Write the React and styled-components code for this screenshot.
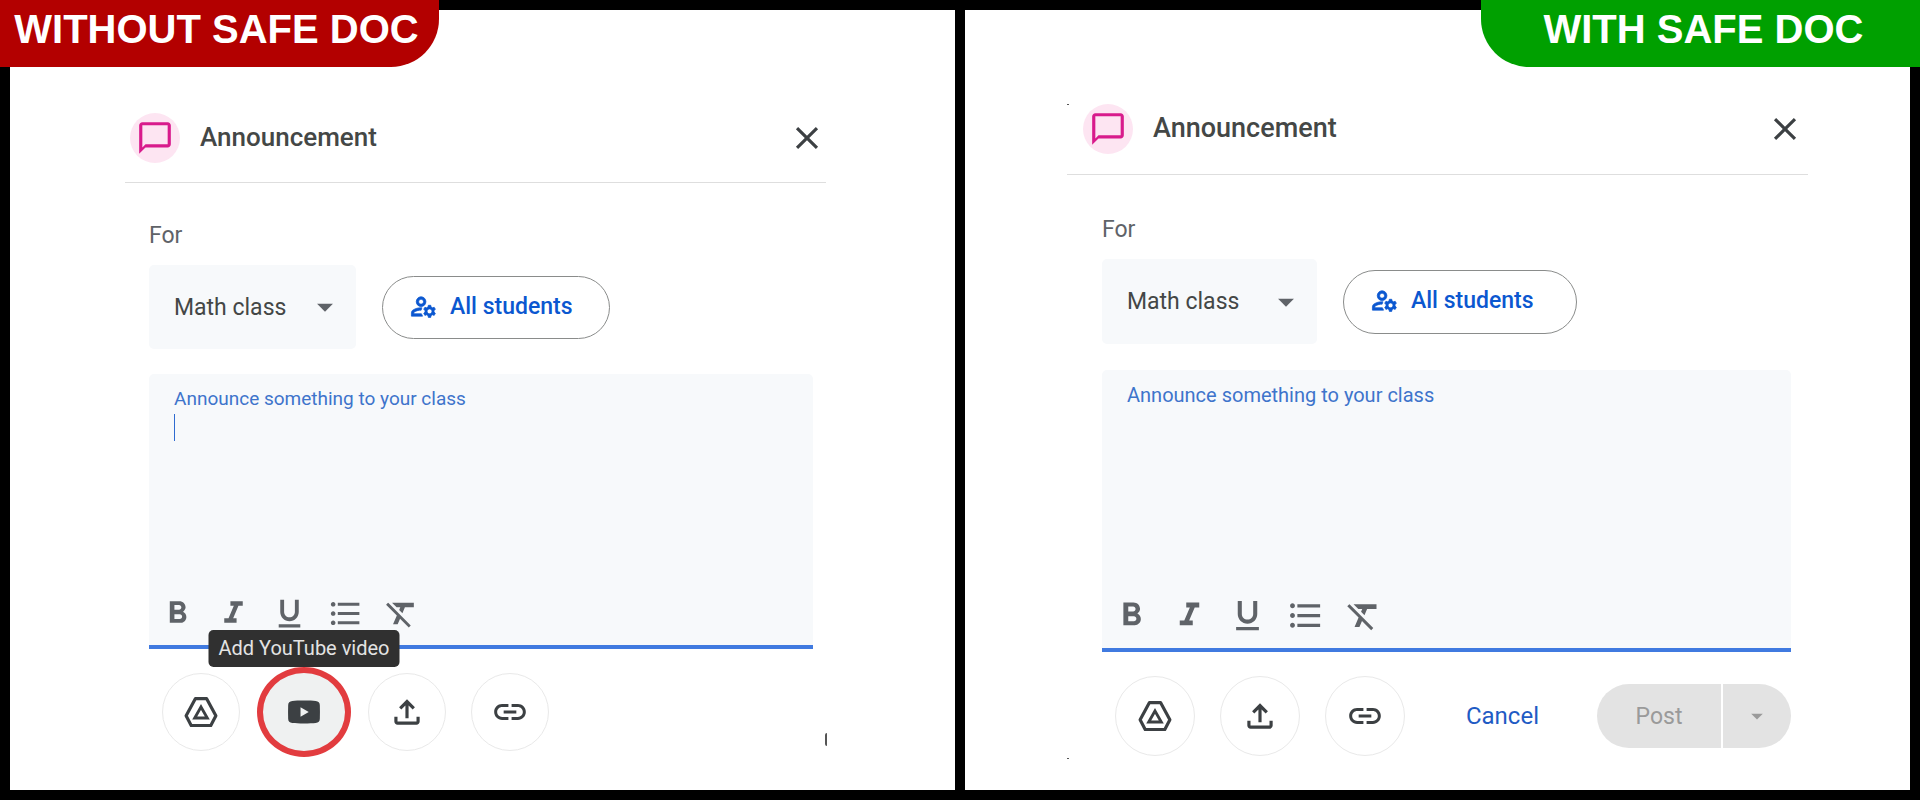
import React from "react";
import styled, { createGlobalStyle, css, ThemeProvider } from "styled-components";
import {
  MdArrowDropDown,
  MdChatBubbleOutline,
  MdClose,
  MdFormatBold,
  MdFormatClear,
  MdFormatItalic,
  MdFormatListBulleted,
  MdFormatUnderlined,
  MdLink,
  MdOutlineFileUpload,
  MdOutlineManageAccounts,
} from "react-icons/md";

const GlobalStyle = createGlobalStyle`
  * {
    box-sizing: border-box;
  }

  body {
    margin: 0;
    background-color: #000000;
    font-family: Roboto, "Liberation Sans", sans-serif;
  }

  button, select, textarea {
    margin: 0;
    padding: 0;
    border: none;
    background: none;
    font-family: inherit;
  }

  svg {
    display: block;
    flex: none;
  }
`;

// the two dialogs share every part and differ only in these sizes
const compact = {
  panelPadding: "103px 129px 0 115px",
  headPadding: "0 0 19px 5px",
  titleSize: "26px",
  bodyPadding: "40px 13px 0 24px",
  selectWidth: "207px",
  selectHeight: "84px",
  pillWidth: "228px",
  pillHeight: "63px",
  labelSize: "19px",
  rowGap: "25px",
  editorHeight: "275px",
  icon: "37px",
  toolWidth: "56px",
  round: "78px",
};

const roomy = {
  panelPadding: "94px 102px 0 102px",
  headPadding: "0 4px 20px 16px",
  titleSize: "27px",
  bodyPadding: "42px 17px 0 35px",
  selectWidth: "215px",
  selectHeight: "85px",
  pillWidth: "234px",
  pillHeight: "64px",
  labelSize: "20px",
  rowGap: "26px",
  editorHeight: "282px",
  icon: "39px",
  toolWidth: "58px",
  round: "80px",
};

const Page = styled.main`
  position: relative;
  display: grid;
  grid-template-columns: repeat(2, minmax(0, 1fr));
  gap: 10px;
  min-height: 100vh;
  padding: 10px;
`;

const Banner = styled.h2`
  position: absolute;
  top: 0;
  width: 439px;
  height: 67px;
  margin: 0;
  background-color: ${(props) => props.$color};
  color: #ffffff;
  font-family: "Liberation Sans", Arial, sans-serif;
  font-size: 40px;
  font-weight: 700;
  line-height: 58px;
  text-align: center;
  ${(props) =>
    props.$side === "left"
      ? css`
          left: 0;
          padding-right: 6px;
          border-radius: 0 0 48px 0;
        `
      : css`
          right: 0;
          padding-left: 6px;
          border-radius: 0 0 0 48px;
        `}
`;

const Panel = styled.section`
  padding: ${(props) => props.theme.panelPadding};
  background-color: #ffffff;
`;

const Dialog = styled.div`
  position: relative;
`;

const Speck = styled.span`
  position: absolute;
  background-color: #555555;
  ${(props) =>
    props.$place === "edge" &&
    css`
      right: -1px;
      bottom: 5px;
      width: 2px;
      height: 13px;
      border-radius: 2px 0 0 2px;
    `}
  ${(props) =>
    props.$place === "top" &&
    css`
      top: 0;
      left: 0;
      width: 2px;
      height: 1px;
    `}
  ${(props) =>
    props.$place === "bottom" &&
    css`
      bottom: -3px;
      left: 0;
      width: 2px;
      height: 1px;
    `}
`;

const Head = styled.header`
  display: flex;
  align-items: center;
  padding: ${(props) => props.theme.headPadding};
  border-bottom: 1px solid #dedede;
`;

const Badge = styled.span`
  display: flex;
  align-items: center;
  justify-content: center;
  width: 50px;
  height: 50px;
  margin-right: 20px;
  border-radius: 50%;
  background-color: #fde5f2;
  color: #d81b8c;
`;

const Title = styled.h3`
  flex: 1;
  margin: 0;
  padding-bottom: 3px;
  color: #444746;
  font-size: ${(props) => props.theme.titleSize};
  font-weight: 500;
  line-height: 32px;
`;

const CloseButton = styled.button`
  color: #3c4043;
  cursor: pointer;
`;

const Body = styled.div`
  padding: ${(props) => props.theme.bodyPadding};
`;

const ForLabel = styled.label`
  display: block;
  margin-bottom: 16px;
  color: #5f6368;
  font-size: 23px;
  line-height: 26px;
`;

const AudienceRow = styled.div`
  display: flex;
  align-items: center;
  gap: 26px;
  margin-bottom: ${(props) => props.theme.rowGap};
`;

const SelectBox = styled.div`
  position: relative;
  width: ${(props) => props.theme.selectWidth};

  > select {
    appearance: none;
    width: 100%;
    height: ${(props) => props.theme.selectHeight};
    padding-left: 25px;
    border-radius: 5px;
    background-color: #f7f9fb;
    color: #444746;
    font-size: 23px;
  }

  > svg {
    position: absolute;
    top: 50%;
    right: 12px;
    transform: translateY(-50%);
    color: #5f6368;
    pointer-events: none;
  }
`;

const StudentsButton = styled.button`
  display: flex;
  align-items: center;
  gap: 12px;
  width: ${(props) => props.theme.pillWidth};
  height: ${(props) => props.theme.pillHeight};
  padding: 0 0 2px 26px;
  border: 1px solid #8a8c8b;
  border-radius: 32px;
  color: #0b57d0;
  font-size: 23px;
  font-weight: 500;
  cursor: pointer;

  path {
    stroke-width: 0.6px;
  }

  path[fill="none"] {
    stroke: none;
  }
`;

const Editor = styled.div`
  display: flex;
  flex-direction: column;
  height: ${(props) => props.theme.editorHeight};
  padding: 13px 0;
  border-bottom: 4px solid #407ae0;
  border-radius: 5px 5px 0 0;
  background-color: #f7f9fb;

  > label {
    padding-left: 25px;
    color: #3e74cb;
    font-size: ${(props) => props.theme.labelSize};
    line-height: 24px;
  }
`;

const Writing = styled.div`
  position: relative;
  flex: 1;

  > textarea {
    display: block;
    width: 100%;
    height: 100%;
    padding: 4px 25px;
    outline: none;
    resize: none;
    font-size: 22px;
    line-height: 26px;
  }
`;

const Caret = styled.span`
  position: absolute;
  top: 3px;
  left: 25px;
  width: 1px;
  height: 27px;
  background-color: #2f6bd0;
`;

const Toolbar = styled.div`
  display: flex;
`;

const ToolButton = styled.button`
  display: flex;
  justify-content: center;
  width: ${(props) => props.theme.toolWidth};
  color: #5f6368;
  cursor: pointer;
`;

const Actions = styled.div`
  display: flex;
  align-items: center;
  gap: 25px;
  margin-top: 24px;
  padding-left: 13px;
`;

const RoundButton = styled.button`
  display: flex;
  align-items: center;
  justify-content: center;
  width: ${(props) => props.theme.round};
  height: ${(props) => props.theme.round};
  border: 1px solid #e9e9e9;
  border-radius: 50%;
  color: #3c4043;
  cursor: pointer;

  ${(props) =>
    props.$marked &&
    css`
      width: 94px;
      height: 90px;
      margin: -6px -8px;
      border: 6px solid #e23c3f;
      background-color: #eff1f1;
    `}
`;

const TooltipAnchor = styled.div`
  position: relative;
`;

const Tooltip = styled.span`
  position: absolute;
  bottom: 84px;
  left: 50%;
  width: 191px;
  transform: translateX(-50%);
  border-radius: 5px;
  background-color: #303030;
  color: #e3e3e3;
  font-size: 20px;
  line-height: 37px;
  text-align: center;
  white-space: nowrap;
`;

const CancelButton = styled.button`
  margin-left: auto;
  margin-right: 33px;
  color: #1f5bc4;
  font-size: 24px;
  cursor: pointer;
`;

const PostGroup = styled.div`
  display: flex;
  gap: 2px;

  > button {
    display: flex;
    align-items: center;
    justify-content: center;
    height: 64px;
    background-color: #e3e3e3;
    color: #9a9a9a;
    font-size: 23px;
  }

  > button:first-child {
    width: 124px;
    border-radius: 32px 0 0 32px;
  }

  > button:last-child {
    width: 68px;
    border-radius: 0 32px 32px 0;
  }
`;

function DriveIcon() {
  return (
    <svg
      width="38"
      height="38"
      viewBox="0 0 24 24"
      fill="none"
      stroke="currentColor"
      strokeWidth="2"
      strokeLinejoin="round"
    >
      <path d="M8.5 3.5H15.5L21.4 14.4L18.2 20.5H5.8L2.6 14.4Z" />
      <path d="M12 8.8L16 15.8H8Z" strokeLinejoin="miter" strokeWidth="1.8" />
    </svg>
  );
}

function YoutubeIcon() {
  return (
    <svg width="38" height="38" viewBox="0 0 24 24" fill="currentColor">
      <path
        fillRule="evenodd"
        d="M12 4.8C15 4.8 17.8 4.9 19.4 5.1C21.1 5.3 22 6.2 22 7.8C22.1 10.6 22.1 13.4 22 16.2C22 17.8 21.1 18.7 19.4 18.9C17.8 19.1 15 19.2 12 19.2C9 19.2 6.2 19.1 4.6 18.9C2.9 18.7 2 17.8 2 16.2C1.9 13.4 1.9 10.6 2 7.8C2 6.2 2.9 5.3 4.6 5.1C6.2 4.9 9 4.8 12 4.8ZM9.8 9V15L15 12Z"
      />
    </svg>
  );
}

const tools = [
  { name: "Bold", Icon: MdFormatBold },
  { name: "Italic", Icon: MdFormatItalic },
  { name: "Underline", Icon: MdFormatUnderlined },
  { name: "Bulleted list", Icon: MdFormatListBulleted },
  { name: "Remove formatting", Icon: MdFormatClear },
];

function AnnouncementPanel({ id, theme, showYoutube, showPost, children }) {
  return (
    <ThemeProvider theme={theme}>
      <Panel>
        <Dialog>
          <Head>
            <Badge>
              <MdChatBubbleOutline size={38} />
            </Badge>
            <Title>Announcement</Title>
            <CloseButton aria-label="Close">
              <MdClose size={38} />
            </CloseButton>
          </Head>
          <Body>
            <ForLabel htmlFor={`${id}-class`}>For</ForLabel>
            <AudienceRow>
              <SelectBox>
                <select id={`${id}-class`}>
                  <option>Math class</option>
                </select>
                <MdArrowDropDown size={38} />
              </SelectBox>
              <StudentsButton>
                <MdOutlineManageAccounts size={29} />
                All students
              </StudentsButton>
            </AudienceRow>
            <Editor>
              <label htmlFor={`${id}-text`}>
                Announce something to your class
              </label>
              <Writing>
                <textarea id={`${id}-text`} />
                {showYoutube && <Caret />}
              </Writing>
              <Toolbar>
                {tools.map(({ name, Icon }) => (
                  <ToolButton key={name} aria-label={name}>
                    <Icon size={theme.icon} />
                  </ToolButton>
                ))}
              </Toolbar>
            </Editor>
            <Actions>
              <RoundButton aria-label="Add from Drive">
                <DriveIcon />
              </RoundButton>
              {showYoutube && (
                <TooltipAnchor>
                  <RoundButton $marked aria-labelledby={`${id}-tip`}>
                    <YoutubeIcon />
                  </RoundButton>
                  <Tooltip id={`${id}-tip`} role="tooltip">
                    Add YouTube video
                  </Tooltip>
                </TooltipAnchor>
              )}
              <RoundButton aria-label="Upload file">
                <MdOutlineFileUpload size={38} />
              </RoundButton>
              <RoundButton aria-label="Add link">
                <MdLink size={38} />
              </RoundButton>
              {showPost && (
                <>
                  <CancelButton>Cancel</CancelButton>
                  <PostGroup>
                    <button disabled>Post</button>
                    <button disabled aria-label="More post options">
                      <MdArrowDropDown size={28} />
                    </button>
                  </PostGroup>
                </>
              )}
            </Actions>
          </Body>
          {children}
        </Dialog>
      </Panel>
    </ThemeProvider>
  );
}

function App() {
  return (
    <>
      <GlobalStyle />
      <Page>
        <AnnouncementPanel id="without" theme={compact} showYoutube>
          <Speck $place="edge" />
        </AnnouncementPanel>
        <AnnouncementPanel id="with" theme={roomy} showPost>
          <Speck $place="top" />
          <Speck $place="bottom" />
        </AnnouncementPanel>
        <Banner $side="left" $color="#b30000">
          WITHOUT SAFE DOC
        </Banner>
        <Banner $side="right" $color="#00a000">
          WITH SAFE DOC
        </Banner>
      </Page>
    </>
  );
}

export default App;
